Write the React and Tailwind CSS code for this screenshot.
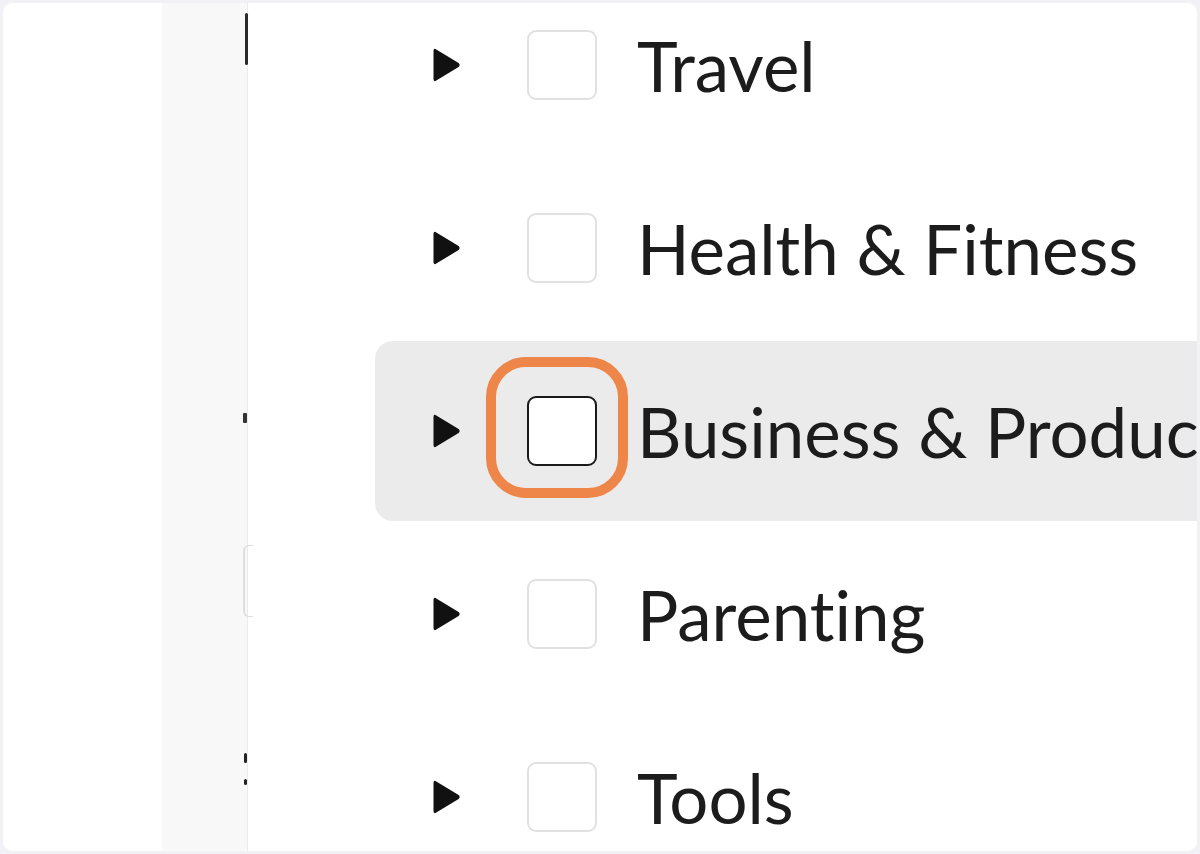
import React from 'react';

const categories = [
  { name: 'Travel' },
  { name: 'Health & Fitness' },
  { name: 'Business & Productivity', active: true },
  { name: 'Parenting' },
  { name: 'Tools' },
];

function Caret() {
  return (
    <svg width="30" height="36" viewBox="0 0 30 36" className="shrink-0 -ml-[1px]">
      <path d="M2.5 4 Q2.5 0.8 5.3 2.4 L27.6 16 Q29.6 18 27.6 20 L5.3 33.6 Q2.5 35.2 2.5 32 Z" fill="#111" />
    </svg>
  );
}

function CategoryRow({ item }) {
  return (
    <div
      className={
        'h-[180px] shrink-0 flex items-center pl-[57px] rounded-l-[18px] whitespace-nowrap ' +
        (item.active ? 'bg-[#ebebeb]' : '')
      }
    >
      <Caret />
      <div className="relative ml-[66px] shrink-0">
        {item.active && (
          <div className="absolute left-[-41px] top-[-39px] w-[142px] h-[141px] rounded-[40px] border-[10px] border-[#ee8549]" />
        )}
        <div
          className={
            'relative w-[70px] h-[70px] rounded-[9px] bg-white border-2 ' +
            (item.active ? 'border-[#1a1a1a]' : 'border-[#e1e1e1]')
          }
        />
      </div>
      <span className="ml-[40px] text-[69px] leading-none text-[#1c1c1c] [font-variant-ligatures:none]">{item.name}</span>
    </div>
  );
}

export default function App() {
  return (
    <div className="h-[854px] w-[1200px] bg-[#f2f1f6] p-[3px]" style={{ fontFamily: 'Lato, "Open Sans", sans-serif' }}>
      <div className="h-full bg-white rounded-[10px] overflow-hidden flex">
        <div className="w-[159px] shrink-0 bg-white" />
        <div className="w-[85px] shrink-0 bg-[#f8f8f8] relative">
          {/* clipped bits of the panel underneath */}
          <div className="absolute right-[-1px] top-[10px] w-[3px] h-[52px] rounded-full bg-[#2a2a2a]" />
          <div className="absolute right-[0px] top-[410px] w-[4px] h-[10px] bg-[#333] rounded-[1px]" />
          <div className="absolute right-[-6px] top-[542px] w-[10px] h-[72px] rounded-l-[6px] border-l-2 border-y border-[#dedede]" />
          <div className="absolute right-[0px] top-[750px] w-[3px] h-[10px] rounded-full bg-[#222]" />
          <div className="absolute right-[0px] top-[776px] w-[3px] h-[6px] rounded-full bg-[#222]" />
        </div>
        <div className="flex-1 min-w-0 border-l border-[#ebebeb] bg-white overflow-hidden">
          <div className="flex flex-col gap-[3px] pl-[127px] -mt-[28px]">
            {categories.map(c => (
              <CategoryRow key={c.name} item={c} />
            ))}
          </div>
        </div>
      </div>
    </div>
  );
}
